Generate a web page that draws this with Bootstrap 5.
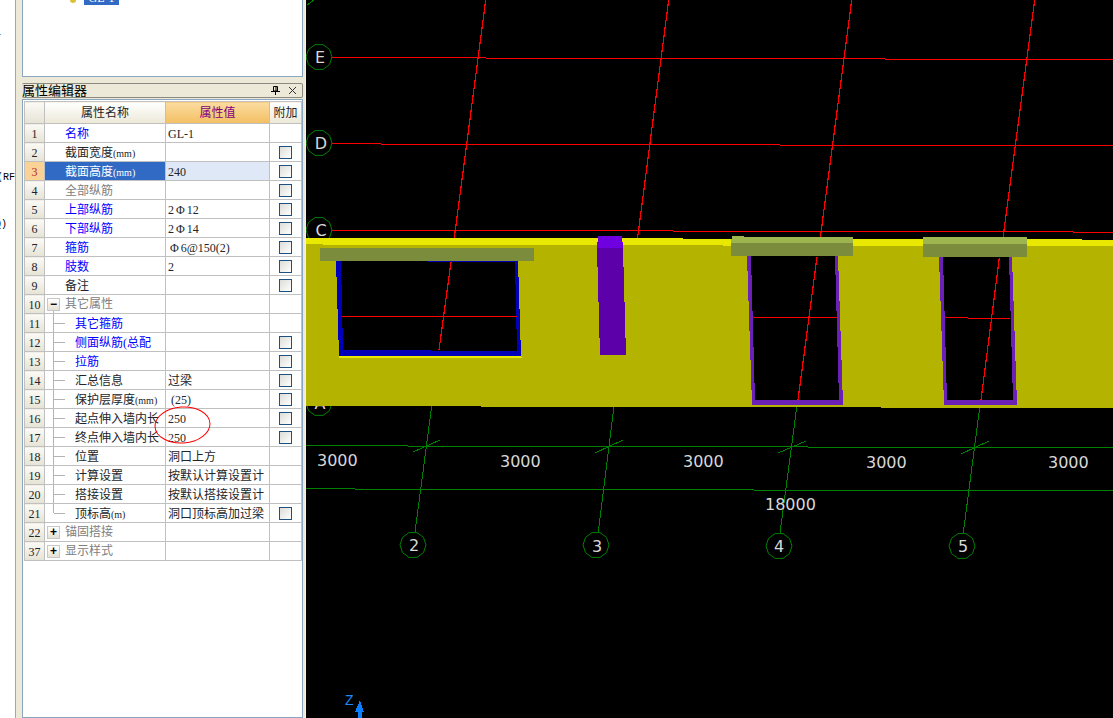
<!DOCTYPE html>
<html lang="zh-CN">
<head>
    <meta charset="UTF-8">
    <meta name="viewport" content="width=device-width, initial-scale=1.0">
    <title>属性编辑器</title>
    <link rel="stylesheet" href="https://cdn.jsdelivr.net/npm/bootstrap@5.3.0/dist/css/bootstrap.min.css">
    <style>
        html, body { height: 100%; }
        body { overflow: hidden; background: #fff; color: #000; font: 12px/18px "Liberation Serif", "Noto Sans CJK SC", serif; }
        .app-shell { width: 1113px; height: 718px; }
        .left-strip { width: 16px; border-right: 1px solid #9aa8b8; }
        .strip-text { white-space: nowrap; font: 10px/18px "Liberation Mono", monospace; }
        .strip-a { margin-top: 24px; margin-left: -5px; }
        .strip-b { margin-top: 127px; margin-left: -3px; }
        .strip-c { margin-top: 29px; margin-left: -5px; }
        .side-panel { width: 289px; background: #ece9d8; padding: 0 2px 0 6px; }
        .tree-box { height: 77px; background: #fff; border: 1px solid #8ba6c1; border-top: 0; padding-left: 47px; }
        .tree-node { margin-top: -9px; height: 14px; line-height: 14px; }
        .tree-icon { width: 6px; height: 12px; background: #d8c23a; margin-right: 8px; border-radius: 3px; }
        .tree-label { background: #316ac5; color: #fff; padding: 0 4.500px; }
        .title-bar { height: 15px; margin-top: 6px; padding-right: 5px; border: solid #8a8a80; border-width: 1px 1px 1px 0; border-radius: 2px; font-size: 13px; line-height: 13px; }
        .grid-box { margin-top: 1px; padding: 1px; background: #fff; border: 1px solid #8ba6c1; }
        .prop-grid { --bs-table-border-color: #c0c0c0; width: 277px; margin: 0; table-layout: fixed; }
        .prop-grid th, .prop-grid td { padding: 2px 0 0; height: 19px; line-height: 16px; font-weight: 400; white-space: nowrap; overflow: hidden; vertical-align: middle; }
        .prop-grid td:last-child { padding-top: 0; }
        .prop-grid thead th { padding-top: 0; height: 22px; text-align: center; background: linear-gradient(#fff, #ece9d8); }
        .prop-grid thead th.val-head { background: linear-gradient(#fbdca0, #f3bf62); color: #800080; }
        .prop-grid .num-cell { text-align: center; background: linear-gradient(#fbfaf5, #e6e3d5); }
        .prop-grid .name-cell { padding-left: 20px; }
        .prop-grid .val-cell { padding-left: 2px; }
        .prop-grid .child { padding-left: 30px; background: linear-gradient(#b4b4b4, #b4b4b4) no-repeat 8px 0 / 1px 100%, linear-gradient(#b4b4b4, #b4b4b4) no-repeat 9px 50% / 11px 1px; }
        .prop-grid .child.last { background: linear-gradient(#b4b4b4, #b4b4b4) no-repeat 8px 0 / 1px 50%, linear-gradient(#b4b4b4, #b4b4b4) no-repeat 9px 50% / 11px 1px; }
        .prop-grid .group { padding-left: 2px; padding-top: 0; }
        .prop-grid .group.open { background: linear-gradient(#b4b4b4, #b4b4b4) no-repeat 8px 15px / 1px 4px; }
        .prop-grid tr.is-active .num-cell { background: #fbd295; color: #b02a2a; }
        .prop-grid tr.is-active .name-cell { background: #316ac5; color: #fff; }
        .prop-grid tr.is-active .val-cell { background: #dfe8f6; }
        .txt-blue { color: #0000ff; }
        .txt-gray { color: #808080; }
        .unit { font-size: 10px; line-height: 1; }
        .rebar { padding: 0 2px; line-height: 1; }
        .tree-btn { width: 13px; height: 13px; margin-right: 5px; border: 1px solid #c8c8c8; background: linear-gradient(#fff, #e4e1d4); color: #000; font: 700 12px/10px "Liberation Sans", sans-serif; }
        .prop-grid .form-check-input { display: block; width: 13px; height: 13px; margin: 0 auto; border: 1px solid #1c5180; border-radius: 0; background: linear-gradient(135deg, #dcdcd7, #fff); }
        .mark-ring { position: absolute; left: 154px; top: 406px; }
        .view-port { width: 808px; height: 718px; background: #000; border-left: 1px solid #f4f2e6; }
        .view-port svg { display: block; }
        .dim-text { font: 16px "DejaVu Sans", sans-serif; fill: #d8d8d8; }
    </style>
</head>
<body>
<div class="app-shell d-flex position-relative">

    <div class="left-strip flex-shrink-0 overflow-hidden">
        <div class="strip-text strip-a">l</div>
        <div class="strip-text strip-b">(RF</div>
        <div class="strip-text strip-c">Q)</div>
    </div>

    <div class="side-panel flex-shrink-0 d-flex flex-column">
        <div class="tree-box overflow-hidden">
            <div class="tree-node d-flex align-items-start">
                <span class="tree-icon"></span>
                <span class="tree-label">GL-1</span>
            </div>
        </div>

        <div class="title-bar d-flex align-items-center justify-content-between">
            <span>属性编辑器</span>
            <span class="d-flex align-items-center gap-2">
                <svg width="9" height="9" viewBox="0 0 9 9"><path d="M2.500 .5h4v4.500h-4zM5 1v4M0 5.500h9M4.500 6v3" fill="none" stroke="#000"/></svg>
                <svg width="9" height="9" viewBox="0 0 9 9"><path d="M1 1l7 7M8 1l-7 7" fill="none" stroke="#333"/></svg>
            </span>
        </div>

        <div class="grid-box flex-grow-1">
            <table class="table table-bordered prop-grid">
                <colgroup><col style="width:20px"><col style="width:121px"><col style="width:104px"><col style="width:32px"></colgroup>
                <thead>
                    <tr><th class="num-cell"></th><th>属性名称</th><th class="val-head">属性值</th><th>附加</th></tr>
                </thead>
                <tbody>
                    <tr><td class="num-cell">1</td><td class="name-cell txt-blue">名称</td><td class="val-cell">GL-1</td><td></td></tr>
                    <tr><td class="num-cell">2</td><td class="name-cell">截面宽度<span class="unit">(mm)</span></td><td class="val-cell"></td><td><input class="form-check-input" type="checkbox"></td></tr>
                    <tr class="is-active"><td class="num-cell">3</td><td class="name-cell">截面高度<span class="unit">(mm)</span></td><td class="val-cell">240</td><td><input class="form-check-input" type="checkbox"></td></tr>
                    <tr><td class="num-cell">4</td><td class="name-cell txt-gray">全部纵筋</td><td class="val-cell"></td><td><input class="form-check-input" type="checkbox"></td></tr>
                    <tr><td class="num-cell">5</td><td class="name-cell txt-blue">上部纵筋</td><td class="val-cell">2<span class="rebar">Φ</span>12</td><td><input class="form-check-input" type="checkbox"></td></tr>
                    <tr><td class="num-cell">6</td><td class="name-cell txt-blue">下部纵筋</td><td class="val-cell">2<span class="rebar">Φ</span>14</td><td><input class="form-check-input" type="checkbox"></td></tr>
                    <tr><td class="num-cell">7</td><td class="name-cell txt-blue">箍筋</td><td class="val-cell"><span class="rebar">Φ</span>6@150(2)</td><td><input class="form-check-input" type="checkbox"></td></tr>
                    <tr><td class="num-cell">8</td><td class="name-cell txt-blue">肢数</td><td class="val-cell">2</td><td><input class="form-check-input" type="checkbox"></td></tr>
                    <tr><td class="num-cell">9</td><td class="name-cell">备注</td><td class="val-cell"></td><td><input class="form-check-input" type="checkbox"></td></tr>
                    <tr><td class="num-cell">10</td><td class="group open txt-gray"><div class="d-flex align-items-center"><span class="tree-btn text-center">−</span>其它属性</div></td><td class="val-cell"></td><td></td></tr>
                    <tr><td class="num-cell">11</td><td class="child txt-blue">其它箍筋</td><td class="val-cell"></td><td></td></tr>
                    <tr><td class="num-cell">12</td><td class="child txt-blue">侧面纵筋(总配</td><td class="val-cell"></td><td><input class="form-check-input" type="checkbox"></td></tr>
                    <tr><td class="num-cell">13</td><td class="child txt-blue">拉筋</td><td class="val-cell"></td><td><input class="form-check-input" type="checkbox"></td></tr>
                    <tr><td class="num-cell">14</td><td class="child">汇总信息</td><td class="val-cell">过梁</td><td><input class="form-check-input" type="checkbox"></td></tr>
                    <tr><td class="num-cell">15</td><td class="child">保护层厚度<span class="unit">(mm)</span></td><td class="val-cell">&nbsp;(25)</td><td><input class="form-check-input" type="checkbox"></td></tr>
                    <tr><td class="num-cell">16</td><td class="child">起点伸入墙内长</td><td class="val-cell">250</td><td><input class="form-check-input" type="checkbox"></td></tr>
                    <tr><td class="num-cell">17</td><td class="child">终点伸入墙内长</td><td class="val-cell">250</td><td><input class="form-check-input" type="checkbox"></td></tr>
                    <tr><td class="num-cell">18</td><td class="child">位置</td><td class="val-cell">洞口上方</td><td></td></tr>
                    <tr><td class="num-cell">19</td><td class="child">计算设置</td><td class="val-cell">按默认计算设置计</td><td></td></tr>
                    <tr><td class="num-cell">20</td><td class="child">搭接设置</td><td class="val-cell">按默认搭接设置计</td><td></td></tr>
                    <tr><td class="num-cell">21</td><td class="child last">顶标高<span class="unit">(m)</span></td><td class="val-cell">洞口顶标高加过梁</td><td><input class="form-check-input" type="checkbox"></td></tr>
                    <tr><td class="num-cell">22</td><td class="group txt-gray"><div class="d-flex align-items-center"><span class="tree-btn text-center">+</span>锚固搭接</div></td><td class="val-cell"></td><td></td></tr>
                    <tr><td class="num-cell">37</td><td class="group txt-gray"><div class="d-flex align-items-center"><span class="tree-btn text-center">+</span>显示样式</div></td><td class="val-cell"></td><td></td></tr>
                </tbody>
            </table>
        </div>
    </div>

    <!-- hand drawn red ring over rows 16 and 17 -->
    <svg class="mark-ring" width="57" height="38" viewBox="0 0 57 38"><ellipse cx="28.500" cy="19" rx="27.500" ry="18" fill="none" stroke="#f00" transform="rotate(-4 28.500 19)"/></svg>

    <div class="view-port flex-grow-1">
        <!-- viewBox keeps the drawing in screen coordinates -->
        <svg width="807" height="718" viewBox="306 0 807 718" shape-rendering="crispEdges">
            <defs>
                <polygon id="axis-ring" points="13,0 10.500,7.600 4,12.400 -4,12.400 -10.500,7.600 -13,0 -10.500,-7.600 -4,-12.400 4,-12.400 10.500,-7.600" fill="#000" stroke="#008000" shape-rendering="auto"/>
            </defs>

            <!-- red grid -->
            <g stroke="#f00" fill="none">
                <path d="M306 57.500H486M486 58.500H885M885 59.500H1113"/>
                <path d="M306 143.500H381M381 144.500H780M780 145.500H1113"/>
                <path d="M306 230.500H673M673 231.500H1073M1073 232.500H1113"/>
                <path stroke-width="1.200" d="M485.700 0L454 240M668.700 0L637.300 240M851.700 0L820 240M1034.700 0L1002.700 240"/>
            </g>

            <!-- green grid -->
            <g stroke="#008000" fill="none">
                <path d="M306 445.500H408M408 446.500H808M808 447.500H1113"/>
                <path d="M306 488.500H355M355 489.500H754M754 490.500H1113"/>
                <path d="M431.700 406L415 532M614 406L598.300 532M797 405L780 533M980 405L963.300 533"/>
                <path d="M413 452L440 440M595 453L623 440M778 453L806 441M961 454L989 441"/>
                <path d="M307 5L314 0"/>
            </g>

            <use href="#axis-ring" x="319" y="57"/>
            <use href="#axis-ring" x="319" y="143"/>
            <use href="#axis-ring" x="319" y="230"/>
            <use href="#axis-ring" x="319" y="403"/>
            <use href="#axis-ring" x="413" y="545"/>
            <use href="#axis-ring" x="596" y="545"/>
            <use href="#axis-ring" x="779" y="546"/>
            <use href="#axis-ring" x="962" y="546"/>
            <g class="dim-text" text-anchor="middle">
                <text x="320" y="63">E</text>
                <text x="321" y="149">D</text>
                <text x="321" y="236">C</text>
                <text x="320" y="409">A</text>
                <text x="414" y="551">2</text>
                <text x="597" y="552">3</text>
                <text x="779" y="552">4</text>
                <text x="963" y="552">5</text>
            </g>

            <!-- wall -->
            <polygon fill="#b3b300" points="306,244 323,244 323,245 723,245 723,246 1113,246 1113,408 881,408 881,407 481,407 481,406 306,406"/>
            <polygon fill="#e8e800" points="306,238 683,238 683,239 1082,239 1082,240 1113,240 1113,246 723,246 723,245 323,245 323,244 306,244"/>

            <!-- opening 1 -->
            <polygon fill="#e8e800" points="339,355 521,355 522,358 339,358"/>
            <polygon fill="#0000bb" points="336,261 518,261 521,356 339,356"/>
            <polygon fill="#000" points="341,261 515,262 517,351 343,350"/>
            <path d="M342 316.500H517" stroke="#f00" fill="none"/>
            <path d="M451 262L439 350" stroke="#f00" stroke-width="1.200" fill="none"/>

            <!-- column -->
            <polygon fill="#5c00aa" points="597,248 623,248 626,355 600,355"/>
            <polygon fill="#6f00e0" points="598,236 622,236 623,248 597,248"/>

            <!-- opening 2 -->
            <polygon fill="#6b21b5" points="747,256 838,256 843,405 752,405"/>
            <polygon fill="#000" points="751,256 835,256 839,400 755,400"/>
            <path d="M753 317.500H837" stroke="#f00" fill="none"/>
            <path d="M817 257L798 400" stroke="#f00" stroke-width="1.200" fill="none"/>

            <!-- opening 3 -->
            <polygon fill="#6b21b5" points="939,257 1012,257 1017,405 944,405"/>
            <polygon fill="#000" points="943,257 1009,257 1013,400 947,400"/>
            <path d="M945 317.500H968M968 318.500H1010" stroke="#f00" fill="none"/>
            <path d="M999.300 258L981 400" stroke="#f00" stroke-width="1.200" fill="none"/>

            <!-- lintels -->
            <rect x="320" y="248" width="214" height="13" fill="#7b8c3c"/>
            <rect x="731" y="243" width="122" height="13" fill="#7b8c3c"/>
            <polygon fill="#9eb44e" points="732,236 744,236 744,237 853,237 853,243 731,243"/>
            <rect x="923" y="244" width="104" height="13" fill="#7b8c3c"/>
            <rect x="923" y="237" width="104" height="7" fill="#9eb44e"/>

            <!-- dimensions -->
            <g class="dim-text">
                <text x="317" y="466">3000</text>
                <text x="500" y="467">3000</text>
                <text x="683" y="467">3000</text>
                <text x="866" y="468">3000</text>
                <text x="1048" y="468">3000</text>
                <text x="765" y="510">18000</text>
            </g>

            <!-- z axis marker -->
            <text x="345" y="705" fill="#1e88ff" font-family="Liberation Sans" font-size="14">Z</text>
            <polygon fill="#0a80ff" points="360,700 364,712 362,712 362,718 358,718 358,712 355,712"/>
        </svg>
    </div>
</div>
<script src="https://cdn.jsdelivr.net/npm/bootstrap@5.3.0/dist/js/bootstrap.bundle.min.js"></script>
</body>
</html>
